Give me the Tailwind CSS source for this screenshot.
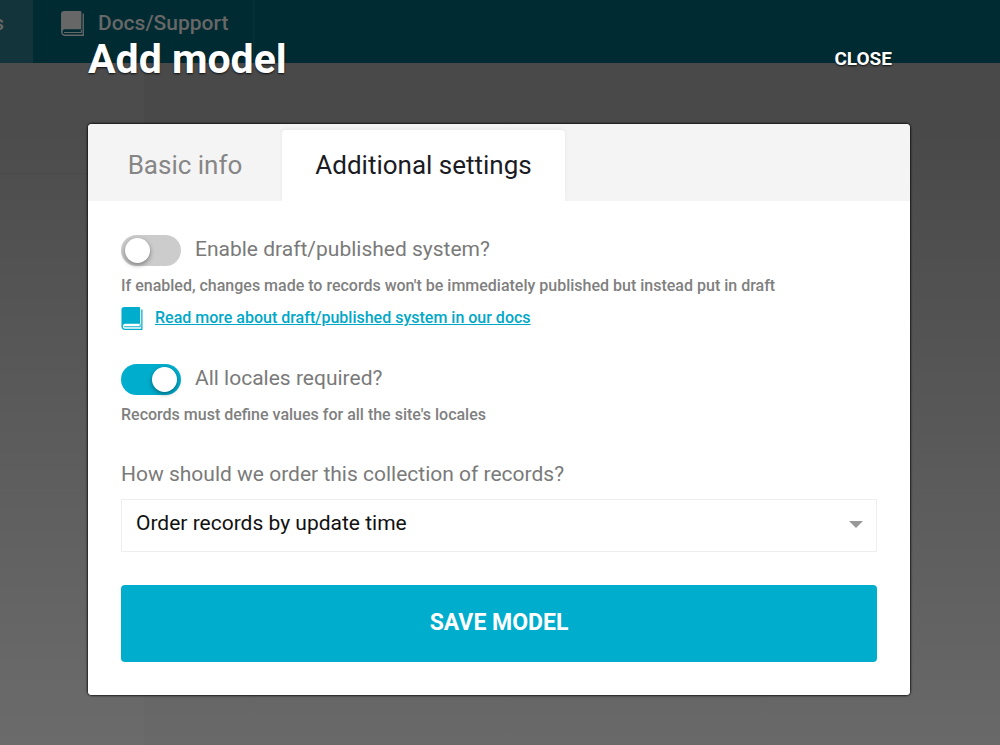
<!DOCTYPE html>
<html lang="en">
<head>
    <meta charset="UTF-8" />
    <meta name="viewport" content="width=device-width, initial-scale=1.0" />
    <title>Add model</title>
    <script src="https://cdn.jsdelivr.net/npm/@tailwindcss/browser@4"></script>
</head>

<body class="font-[Roboto,sans-serif]">
    <div class="relative min-h-screen flex flex-col overflow-hidden">
        <!-- Top navigation -->
        <nav class="flex h-[63px] bg-[#002b32] text-[#676767] text-[21px] font-medium leading-[46px]">
            <a href="#" class="flex w-[33px] justify-end overflow-hidden bg-[#12343a] pr-[29px]">s</a>
            <a href="#" class="flex gap-[14px] border-r border-[#04343b] pl-7 pr-[25px]">
                <svg class="mt-[11px] h-[25px] w-[23px]" viewBox="0 0 22 24" fill="none" stroke="#676767">
                    <path d="M3 0H18.500Q19.500 0 19.500 1V17.500H3.500Q1.500 17.500 1.300 20.500H0V3Q0 0 3 0Z" fill="#676767" stroke="none" />
                    <path d="M.7 20Q.7 23.300 3.500 23.300H21.300V2.500" stroke-width="1.300" />
                    <path d="M2.800 20.600H19.500V18" stroke-width="1" />
                </svg>
                Docs/Support
            </a>
        </nav>

        <!-- Page behind the modal -->
        <div class="flex flex-1 bg-linear-to-b from-[#494949] from-10% to-[#696969]">
            <div class="w-36 bg-white/2">
                <div class="h-[111px] border-b border-black/5"></div>
            </div>
        </div>

        <!-- Modal -->
        <div class="absolute inset-0 pl-[88px] pr-[90px]">
            <div class="flex items-center justify-between h-[124px] pr-[18px] pb-[6px] text-white [text-shadow:0_1px_2px_rgba(0,0,0,0.8)]">
                <h1 class="text-[41px] leading-[48px] font-bold">Add model</h1>
                <button type="button" class="text-[19px] font-bold [text-shadow:0_1px_2px_rgba(0,0,0,0.8)]">CLOSE</button>
            </div>

            <div class="rounded-[4px] bg-white shadow-[0_0_2px_1px_rgba(0,0,0,0.7)]">
                <div class="flex h-[77px] rounded-t-[4px] bg-[#f4f4f4] pt-[6px] text-[26px]" role="tablist">
                    <button type="button" role="tab" class="w-[194px] text-[#868686]">Basic info</button>
                    <button type="button" role="tab" aria-selected="true" class="w-[283px] rounded-t-[4px] bg-white text-[#1b1b24] shadow-[0_-1px_4px_rgba(0,0,0,0.06)]">Additional settings</button>
                </div>

                <form class="relative bg-white rounded-b-[4px] px-[33px] pt-[34px] pb-[33px] text-[#808080]">
                    <div class="flex items-center gap-[14px]">
                        <input type="checkbox" id="draft" class="h-[31px] w-[60px] appearance-none rounded-full bg-[#cccccc] p-[3px] before:ml-px before:block before:size-[25px] before:rounded-full before:bg-white before:shadow-[0_2px_5px_rgba(0,0,0,0.4)] checked:bg-[#00adcd] checked:before:ml-[28px]" />
                        <label for="draft" class="pb-[2px] text-[21px] leading-[27px] text-[#7a7a7a]">Enable draft/published system?</label>
                    </div>
                    <p class="mt-2 text-base leading-6 font-medium">If enabled, changes made to records won't be immediately published but instead put in draft</p>
                    <a href="#" class="mt-2 flex items-center gap-3 text-base leading-6 font-medium text-[#00a8c8]">
                        <svg class="h-[23px] w-[22px]" viewBox="0 0 22 24" fill="none" stroke="#00adcd">
                            <path d="M3 0H18.500Q19.500 0 19.500 1V17.500H3.500Q1.500 17.500 1.300 20.500H0V3Q0 0 3 0Z" fill="#00adcd" stroke="none" />
                            <path d="M.7 20Q.7 23.300 3.500 23.300H21.300V2.500" stroke-width="1.300" />
                            <path d="M2.800 20.600H19.500V18" stroke-width="1" />
                        </svg>
                        <span class="underline">Read more about draft/published system in our docs</span>
                    </a>

                    <div class="mt-[34px] flex items-center gap-[14px]">
                        <input type="checkbox" id="locales" checked class="h-[31px] w-[60px] appearance-none rounded-full bg-[#cccccc] p-[3px] before:ml-px before:block before:size-[25px] before:rounded-full before:bg-white before:shadow-[0_2px_5px_rgba(0,0,0,0.4)] checked:bg-[#00adcd] checked:before:ml-[28px]" />
                        <label for="locales" class="pb-[2px] text-[21px] leading-[27px] text-[#7a7a7a]">All locales required?</label>
                    </div>
                    <p class="mt-2 text-base leading-6 font-medium">Records must define values for all the site's locales</p>

                    <label for="order" class="mt-[34px] block text-[21px] leading-[27px] text-[#7a7a7a]">How should we order this collection of records?</label>
                    <div class="relative mt-[11px]">
                        <select id="order" class="block h-[53px] w-full appearance-none border border-[#eeeeee] bg-white pl-[14px] pr-10 pb-[4px] text-[21px] text-[#111111]">
                            <option>Order records by update time</option>
                        </select>
                        <svg class="pointer-events-none absolute right-[14px] top-[22px] h-[7px] w-[14px]" viewBox="0 0 14 7" fill="#999999">
                            <path d="M0 0H14L7 7Z" />
                        </svg>
                    </div>

                    <button type="submit" class="mt-[33px] block h-[77px] w-full rounded-[4px] bg-[#00adcd] text-[23px] font-bold text-white">SAVE MODEL</button>
                </form>
            </div>
        </div>
    </div>
</body>
</html>
